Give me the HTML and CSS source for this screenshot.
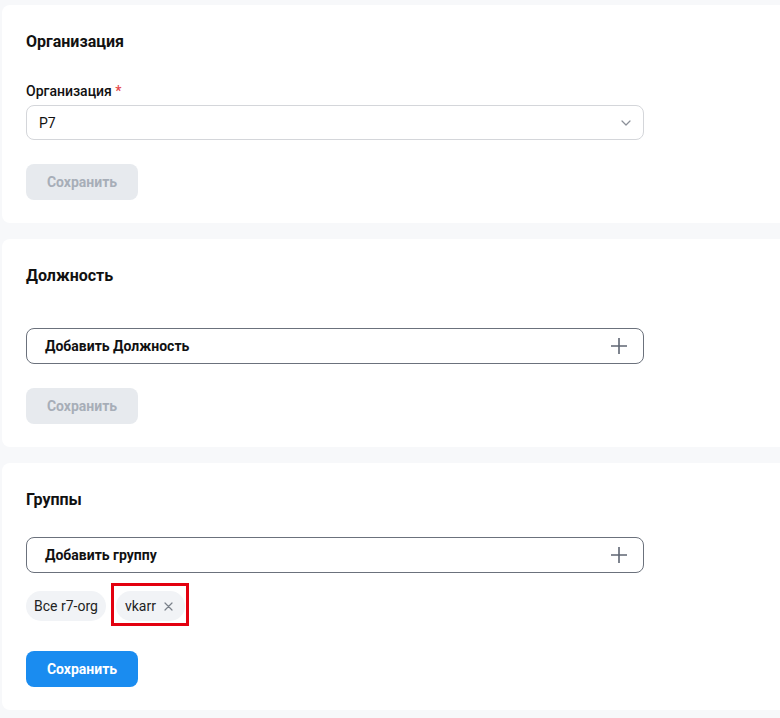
FILE: index.html
```html
<!DOCTYPE html>
<html lang="ru">
<head>
  <meta charset="UTF-8">
  <meta name="viewport" content="width=device-width, initial-scale=1.0">
  <title>Профиль пользователя</title>
  <link rel="stylesheet" href="styles.css">
</head>
<body>
  <div class="page">

    <section class="card">
      <h2 class="card-title">Организация</h2>
      <label class="field-label">Организация <span class="required">*</span></label>
      <div class="select">
        <span class="select-value">Р7</span>
        <svg class="chevron" width="10" height="6" viewBox="0 0 10 6" fill="none">
          <path d="M1 1l4 4 4-4" stroke="#8a8f98" stroke-width="1.2" stroke-linecap="round" stroke-linejoin="round"/>
        </svg>
      </div>
      <button class="save-btn" disabled>Сохранить</button>
    </section>

    <section class="card">
      <h2 class="card-title">Должность</h2>
      <div class="add-row add-row--position">
        <span>Добавить Должность</span>
        <svg class="plus" width="18" height="18" viewBox="0 0 18 18" fill="none">
          <path d="M9 1v16M1 9h16" stroke="#5f6673" stroke-width="1.6"/>
        </svg>
      </div>
      <button class="save-btn" disabled>Сохранить</button>
    </section>

    <section class="card">
      <h2 class="card-title">Группы</h2>
      <div class="add-row add-row--groups">
        <span>Добавить группу</span>
        <svg class="plus" width="18" height="18" viewBox="0 0 18 18" fill="none">
          <path d="M9 1v16M1 9h16" stroke="#5f6673" stroke-width="1.6"/>
        </svg>
      </div>
      <div class="chips">
        <span class="chip">Все r7-org</span>
        <span class="chip chip--marked">vkarr
          <svg class="chip-close" width="9" height="9" viewBox="0 0 9 9" fill="none">
            <path d="M1 1l7 7M8 1L1 8" stroke="#7a808a" stroke-width="1.2" stroke-linecap="round"/>
          </svg>
        </span>
      </div>
      <button class="save-btn save-btn--active">Сохранить</button>
    </section>

  </div>
</body>
</html>
```

FILE: styles.css
```css
body {
  margin: 0;
  background-color: #f7f8fa;
  font-family: Roboto, "Noto Sans", Arial, sans-serif;
  color: #111;
  overflow: hidden;
}

.page {
  padding: 5px 0 0 2px;
  display: flex;
  flex-direction: column;
  gap: 16px;
}

.card {
  width: calc(100% + 12px);
  box-sizing: border-box;
  background-color: #fff;
  border-radius: 8px;
  padding: 25px 24px 23px 24px;
}

.card-title {
  margin: 0;
  font-size: 16px;
  line-height: 24px;
  font-weight: 700;
}

.field-label {
  display: block;
  margin-top: 29px;
  font-size: 14px;
  line-height: 16px;
  font-weight: 500;
  margin-bottom: 6px;
}

.required {
  color: #e5484d;
}

.select {
  width: 618px;
  height: 35px;
  box-sizing: border-box;
  border: 1px solid #d4d6da;
  border-radius: 8px;
  display: flex;
  align-items: center;
  justify-content: space-between;
  padding: 0 12px 0 12px;
  font-size: 14px;
}

.add-row {
  width: 618px;
  height: 36px;
  box-sizing: border-box;
  border: 1px solid #6b717c;
  border-radius: 8px;
  display: flex;
  align-items: center;
  justify-content: space-between;
  padding: 0 15px 0 18px;
  font-size: 14px;
  font-weight: 700;
}

.add-row--position {
  margin-top: 40px;
}

.add-row--groups {
  margin-top: 25px;
}

.save-btn {
  display: block;
  margin-top: 24px;
  width: 112px;
  height: 36px;
  border: none;
  border-radius: 8px;
  background-color: #e7eaee;
  color: #a7aeb8;
  font-family: inherit;
  font-size: 14px;
  font-weight: 700;
  padding: 0;
}

.save-btn--active {
  margin-top: 30px;
  background-color: #1a8cf0;
  color: #fff;
  cursor: pointer;
}

.chips {
  display: flex;
  gap: 10px;
  margin-top: 18px;
}

.chip {
  display: inline-flex;
  align-items: center;
  gap: 8px;
  height: 30px;
  padding: 0 8px;
  border-radius: 15px;
  background-color: #f1f3f6;
  font-size: 14px;
  color: #222;
}

.chip--marked {
  position: relative;
  padding: 0 12px 0 9px;
}

/* red frame drawn around the selected group */
.chip--marked::after {
  content: "";
  position: absolute;
  top: -8px;
  bottom: -5px;
  left: -5px;
  right: -4px;
  border: 3px solid #e3000f;
}
```
